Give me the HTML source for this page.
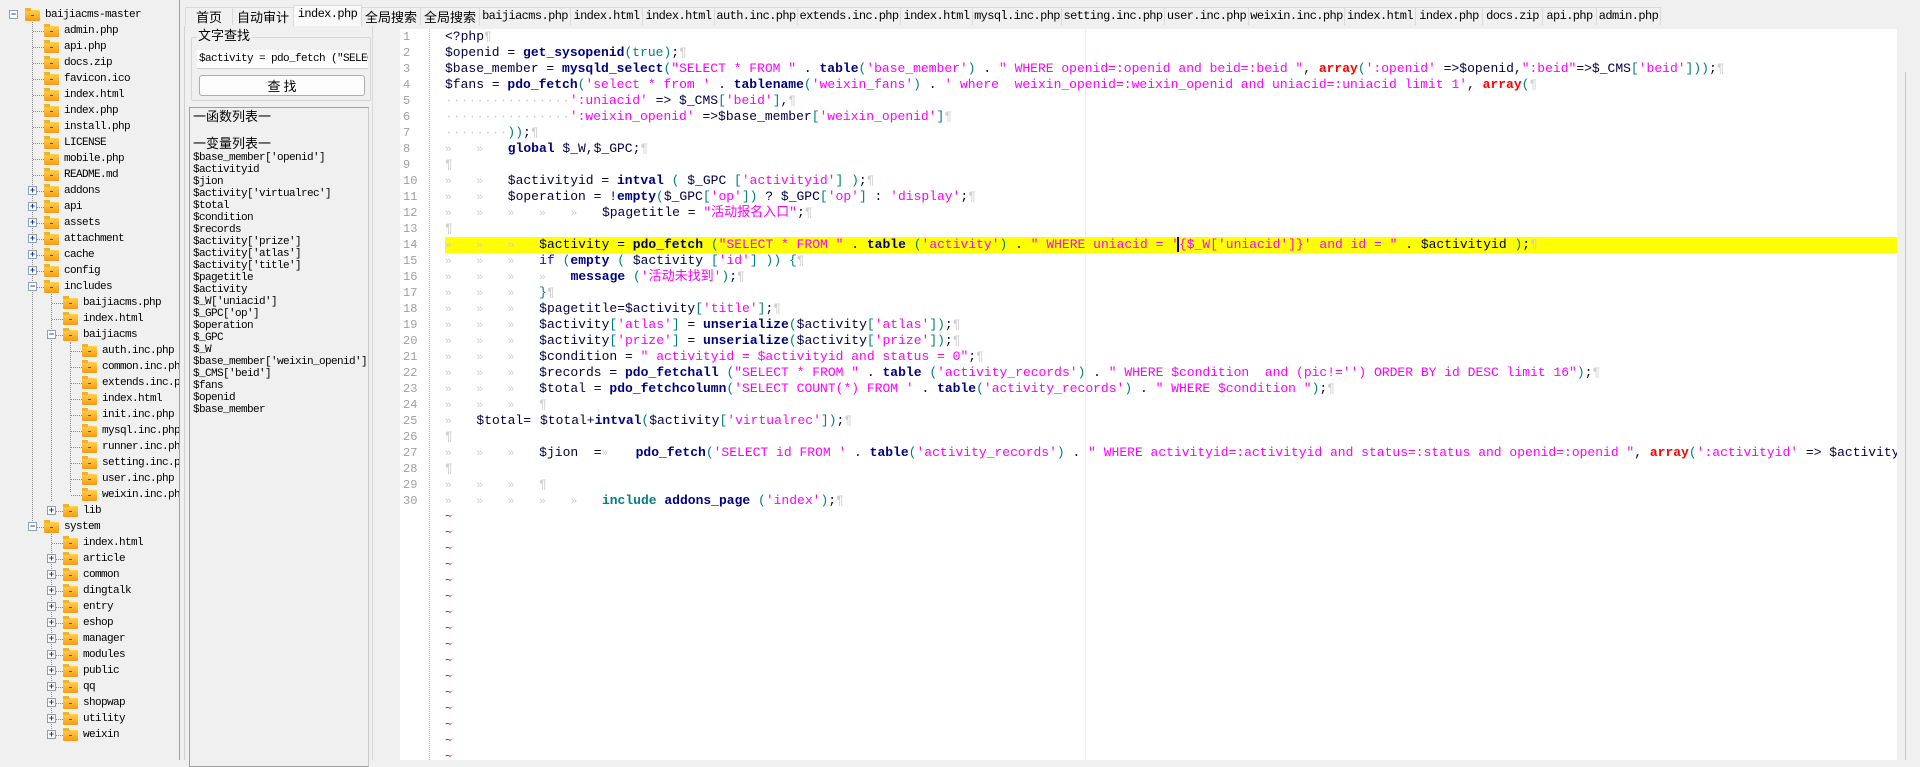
<!DOCTYPE html>
<html><head><meta charset="utf-8">
<style>
*{margin:0;padding:0;box-sizing:border-box}
body{width:1920px;height:760px;overflow:hidden;background:#f0f0f0;position:relative;font-family:"Liberation Mono","Noto Sans CJK SC",monospace;}
.abs{position:absolute}
/* tree */
#tree{position:absolute;left:0;top:0;width:180px;height:760px;background:#f0f0f0;border-right:1px solid #a0a0a0;overflow:hidden}
.row{position:absolute;height:16px;font-size:11px;letter-spacing:-0.6px;line-height:16px;color:#000;white-space:nowrap}
.fold{position:absolute;width:15px;height:11px;background:linear-gradient(#ffd24a,#f59a16);border-radius:1px}
.fold:before{content:"";position:absolute;left:0;top:-2px;width:6px;height:3px;background:#f5b02a}
.fold:after{content:"";position:absolute;left:6px;top:5px;width:3px;height:1px;background:#7a4a00}
.box{position:absolute;width:9px;height:9px;border:1px solid #8e9cb5;background:#fff;font-size:9px;line-height:7px;text-align:center;color:#243a8a;font-family:"Liberation Sans",sans-serif;font-weight:bold}
.vl{position:absolute;border-left:1px dotted #888;width:0}
.hl{position:absolute;border-top:1px dotted #888;height:0}
/* tabs */
.tab{position:absolute;top:7px;height:18px;border:1px solid #dadada;border-bottom:none;background:#f0f0f0;font-size:12px;line-height:17px;text-align:center;white-space:nowrap;overflow:hidden;font-family:"Liberation Mono","Noto Sans CJK SC",monospace;letter-spacing:-0.6px}
.tab.cn{font-family:"Noto Sans CJK SC",sans-serif;letter-spacing:0;font-size:13px}
.tab.act{top:5px;height:21px;background:#f9f9f9}
/* middle */
#list{position:absolute;left:189px;top:107px;width:180px;height:660px;border:1px solid #a0a0a0;border-right:1px solid #c8c8c8;background:#f0f0f0;font-size:11px;letter-spacing:-0.6px;line-height:12px;padding:2px 0 0 3px;white-space:pre}
/* editor */
#ed{position:absolute;left:400px;top:29px;width:1497px;height:731px;background:#fff;overflow:hidden;font-family:"Liberation Mono","Noto Sans CJK SC",monospace;font-size:13px}
.ln{position:absolute;left:3px;width:28px;height:16px;line-height:16px;color:#a0a0a0;font-size:12px}
.cl{position:absolute;left:45px;height:16px;line-height:16px;white-space:pre;color:#000040;right:0;overflow:hidden}
.cl i{font-style:normal;display:inline-block;width:31.4px;color:#cfcfcf;font-size:11px}
.w{color:#d0d0d0}
.f{color:#000080;font-weight:bold}
.s{color:#ff00ff}
.k{color:#ff0000;font-weight:bold}
.t{color:#008080}
.b{color:#0000ff}
.inc{color:#008080;font-weight:bold}
.y{background:#ffff00;left:45px}
.tl{position:absolute;left:45px;color:#e00000;font-size:12px;line-height:16px}
</style></head><body>

<div id="tree">
<div class="vl" style="left:13px;top:20px;height:0"></div>
<div class="vl" style="left:32px;top:22px;height:505px"></div>
<div class="vl" style="left:51px;top:294px;height:207px"></div>
<div class="vl" style="left:70px;top:342px;height:150px"></div>
<div class="vl" style="left:51px;top:534px;height:201px"></div>
</div>

<!-- tabs -->
<div class="tab cn" style="left:185px;width:48px">首页</div>
<div class="tab cn" style="left:232px;width:62px">自动审计</div>
<div class="tab act" style="left:293px;width:69px">index.php</div>
<div class="tab cn" style="left:361px;width:60px">全局搜索</div>
<div class="tab cn" style="left:420px;width:60px">全局搜索</div>
<div class="tab" style="left:479px;width:92px">baijiacms.php</div>
<div class="tab" style="left:570px;width:73px">index.html</div>
<div class="tab" style="left:642px;width:73px">index.html</div>
<div class="tab" style="left:714px;width:84px">auth.inc.php</div>
<div class="tab" style="left:797px;width:104px">extends.inc.php</div>
<div class="tab" style="left:900px;width:73px">index.html</div>
<div class="tab" style="left:972px;width:90px">mysql.inc.php</div>
<div class="tab" style="left:1061px;width:104px">setting.inc.php</div>
<div class="tab" style="left:1164px;width:85px">user.inc.php</div>
<div class="tab" style="left:1248px;width:97px">weixin.inc.php</div>
<div class="tab" style="left:1344px;width:72px">index.html</div>
<div class="tab" style="left:1415px;width:68px">index.php</div>
<div class="tab" style="left:1482px;width:61px">docs.zip</div>
<div class="tab" style="left:1542px;width:55px">api.php</div>
<div class="tab" style="left:1596px;width:65px">admin.php</div>

<!-- middle panel -->
<div class="abs" style="left:184px;top:26px;width:1px;height:734px;background:#d0d0d0"></div>
<div class="abs" style="left:191px;top:37px;width:180px;height:64px;border:1px solid #d6d6d6;border-radius:2px"></div>
<div class="abs" style="left:196px;top:27px;padding:0 2px;background:#f0f0f0;font-family:'Noto Sans CJK SC',sans-serif;font-size:13px;line-height:16px">文字查找</div>
<div class="abs" style="left:197px;top:50px;width:171px;height:19px;background:#fff;border-bottom:1px solid #ccc;font-size:11px;letter-spacing:-0.6px;line-height:19px;padding-left:2px;white-space:pre;overflow:hidden">$activity = pdo_fetch ("SELECT</div>
<div class="abs" style="left:199px;top:75px;width:166px;height:21px;background:#fdfdfd;border:1px solid #adadad;border-radius:3px;font-family:'Noto Sans CJK SC',sans-serif;font-size:13px;line-height:19px;text-align:center">查 找</div>
<div id="list"><span style="font-family:'Noto Sans CJK SC',sans-serif;font-size:13px;letter-spacing:0">一函数列表一</span>

<span style="font-family:'Noto Sans CJK SC',sans-serif;font-size:13px;letter-spacing:0">一变量列表一</span>
$base_member['openid']
$activityid
$jion
$activity['virtualrec']
$total
$condition
$records
$activity['prize']
$activity['atlas']
$activity['title']
$pagetitle
$activity
$_W['uniacid']
$_GPC['op']
$operation
$_GPC
$_W
$base_member['weixin_openid']
$_CMS['beid']
$fans
$openid
$base_member</div>
<div class="abs" style="left:372px;top:26px;width:1px;height:734px;background:#d8d8d8"></div>

<!-- editor -->
<div id="ed">
<div class="abs" style="left:29px;top:0;width:0;height:731px;border-left:1px dotted #c0c0c0"></div>
<div class="abs" style="left:685px;top:0;width:1px;height:731px;background:#ececec"></div>
<div class="cl y" style="top:208px"></div>
<div id="lines"></div>
<div class="ln" style="top:0">1</div><div class="cl" style="top:0">&lt;?php<span class="w">¶</span></div>
<div class="ln" style="top:16px">2</div><div class="cl" style="top:16px">$openid = <span class="f">get_sysopenid</span><span class="t">(true)</span>;<span class="w">¶</span></div>
<div class="ln" style="top:32px">3</div><div class="cl" style="top:32px">$base_member = <span class="f">mysqld_select</span><span class="t">(</span><span class="s">"SELECT * FROM "</span> . <span class="f">table</span><span class="t">(</span><span class="s">'base_member'</span><span class="t">)</span> . <span class="s">" WHERE openid=:openid and beid=:beid "</span>, <span class="k">array</span><span class="t">(</span><span class="s">':openid'</span> =&gt;$openid,<span class="s">":beid"</span>=&gt;$_CMS<span class="t">[</span><span class="s">'beid'</span><span class="t">]))</span>;<span class="w">¶</span></div>
<div class="ln" style="top:48px">4</div><div class="cl" style="top:48px">$fans = <span class="f">pdo_fetch</span><span class="t">(</span><span class="s">'select * from '</span> . <span class="f">tablename</span><span class="t">(</span><span class="s">'weixin_fans'</span><span class="t">)</span> . <span class="s">' where  weixin_openid=:weixin_openid and uniacid=:uniacid limit 1'</span>, <span class="k">array</span><span class="t">(</span><span class="w">¶</span></div>
<div class="ln" style="top:64px">5</div><div class="cl" style="top:64px"><span class="w">················</span><span class="s">':uniacid'</span> =&gt; $_CMS<span class="t">[</span><span class="s">'beid'</span><span class="t">]</span>,<span class="w">¶</span></div>
<div class="ln" style="top:80px">6</div><div class="cl" style="top:80px"><span class="w">················</span><span class="s">':weixin_openid'</span> =&gt;$base_member<span class="t">[</span><span class="s">'weixin_openid'</span><span class="t">]</span><span class="w">¶</span></div>
<div class="ln" style="top:96px">7</div><div class="cl" style="top:96px"><span class="w">········</span><span class="t">))</span>;<span class="w">¶</span></div>
<div class="ln" style="top:112px">8</div><div class="cl" style="top:112px"><i>»</i><i>»</i><span class="f">global</span> $_W,$_GPC;<span class="w">¶</span></div>
<div class="ln" style="top:128px">9</div><div class="cl" style="top:128px"><span class="w">¶</span></div>
<div class="ln" style="top:144px">10</div><div class="cl" style="top:144px"><i>»</i><i>»</i>$activityid = <span class="f">intval</span> <span class="t">(</span> $_GPC <span class="t">[</span><span class="s">'activityid'</span><span class="t">]</span> <span class="t">)</span>;<span class="w">¶</span></div>
<div class="ln" style="top:160px">11</div><div class="cl" style="top:160px"><i>»</i><i>»</i>$operation = !<span class="f">empty</span><span class="t">(</span>$_GPC<span class="t">[</span><span class="s">'op'</span><span class="t">])</span> ? $_GPC<span class="t">[</span><span class="s">'op'</span><span class="t">]</span> : <span class="s">'display'</span>;<span class="w">¶</span></div>
<div class="ln" style="top:176px">12</div><div class="cl" style="top:176px"><i>»</i><i>»</i><i>»</i><i>»</i><i>»</i>$pagetitle = <span class="s">"活动报名入口"</span>;<span class="w">¶</span></div>
<div class="ln" style="top:192px">13</div><div class="cl" style="top:192px"><span class="w">¶</span></div>
<div class="ln" style="top:208px">14</div><div class="cl" style="top:208px"><i>»</i><i>»</i><i>»</i>$activity = <span class="f">pdo_fetch</span> <span class="t">(</span><span class="s">"SELECT * FROM "</span> . <span class="f">table</span> <span class="t">(</span><span class="s">'activity'</span><span class="t">)</span> . <span class="s">" WHERE uniacid = '</span><span style="border-left:2px solid #0000c0;margin-left:-2px"></span><span class="s">{$_W['uniacid']}' and id = "</span> . $activityid <span class="t">)</span>;<span class="w">¶</span></div>
<div class="ln" style="top:224px">15</div><div class="cl" style="top:224px"><i>»</i><i>»</i><i>»</i><span class="b">if</span> <span class="t">(</span><span class="f">empty</span> <span class="t">(</span> $activity <span class="t">[</span><span class="s">'id'</span><span class="t">]</span> <span class="t">))</span> <span class="t">{</span><span class="w">¶</span></div>
<div class="ln" style="top:240px">16</div><div class="cl" style="top:240px"><i>»</i><i>»</i><i>»</i><i>»</i><span class="f">message</span> <span class="t">(</span><span class="s">'活动未找到'</span><span class="t">)</span>;<span class="w">¶</span></div>
<div class="ln" style="top:256px">17</div><div class="cl" style="top:256px"><i>»</i><i>»</i><i>»</i><span class="t">}</span><span class="w">¶</span></div>
<div class="ln" style="top:272px">18</div><div class="cl" style="top:272px"><i>»</i><i>»</i><i>»</i>$pagetitle=$activity<span class="t">[</span><span class="s">'title'</span><span class="t">]</span>;<span class="w">¶</span></div>
<div class="ln" style="top:288px">19</div><div class="cl" style="top:288px"><i>»</i><i>»</i><i>»</i>$activity<span class="t">[</span><span class="s">'atlas'</span><span class="t">]</span> = <span class="f">unserialize</span><span class="t">(</span>$activity<span class="t">[</span><span class="s">'atlas'</span><span class="t">])</span>;<span class="w">¶</span></div>
<div class="ln" style="top:304px">20</div><div class="cl" style="top:304px"><i>»</i><i>»</i><i>»</i>$activity<span class="t">[</span><span class="s">'prize'</span><span class="t">]</span> = <span class="f">unserialize</span><span class="t">(</span>$activity<span class="t">[</span><span class="s">'prize'</span><span class="t">])</span>;<span class="w">¶</span></div>
<div class="ln" style="top:320px">21</div><div class="cl" style="top:320px"><i>»</i><i>»</i><i>»</i>$condition = <span class="s">" activityid = $activityid and status = 0"</span>;<span class="w">¶</span></div>
<div class="ln" style="top:336px">22</div><div class="cl" style="top:336px"><i>»</i><i>»</i><i>»</i>$records = <span class="f">pdo_fetchall</span> <span class="t">(</span><span class="s">"SELECT * FROM "</span> . <span class="f">table</span> <span class="t">(</span><span class="s">'activity_records'</span><span class="t">)</span> . <span class="s">" WHERE $condition  and (pic!='') ORDER BY id DESC limit 16"</span><span class="t">)</span>;<span class="w">¶</span></div>
<div class="ln" style="top:352px">23</div><div class="cl" style="top:352px"><i>»</i><i>»</i><i>»</i>$total = <span class="f">pdo_fetchcolumn</span><span class="t">(</span><span class="s">'SELECT COUNT(*) FROM '</span> . <span class="f">table</span><span class="t">(</span><span class="s">'activity_records'</span><span class="t">)</span> . <span class="s">" WHERE $condition "</span><span class="t">)</span>;<span class="w">¶</span></div>
<div class="ln" style="top:368px">24</div><div class="cl" style="top:368px"><i>»</i><i>»</i><i>»</i><span class="w">¶</span></div>
<div class="ln" style="top:384px">25</div><div class="cl" style="top:384px"><i>»</i>$total=<i style="width:9px"></i>$total+<span class="f">intval</span><span class="t">(</span>$activity<span class="t">[</span><span class="s">'virtualrec'</span><span class="t">])</span>;<span class="w">¶</span></div>
<div class="ln" style="top:400px">26</div><div class="cl" style="top:400px"><span class="w">¶</span></div>
<div class="ln" style="top:416px">27</div><div class="cl" style="top:416px"><i>»</i><i>»</i><i>»</i>$jion  =<i style="width:34px">»</i><span class="f">pdo_fetch</span><span class="t">(</span><span class="s">'SELECT id FROM '</span> . <span class="f">table</span><span class="t">(</span><span class="s">'activity_records'</span><span class="t">)</span> . <span class="s">" WHERE activityid=:activityid and status=:status and openid=:openid "</span>, <span class="k">array</span><span class="t">(</span><span class="s">':activityid'</span> =&gt; $activityid, ':status' =&gt; 1, ':openid' =&gt; $openid));</div>
<div class="ln" style="top:432px">28</div><div class="cl" style="top:432px"><span class="w">¶</span></div>
<div class="ln" style="top:448px">29</div><div class="cl" style="top:448px"><i>»</i><i>»</i><i>»</i><span class="w">¶</span></div>
<div class="ln" style="top:464px">30</div><div class="cl" style="top:464px"><i>»</i><i>»</i><i>»</i><i>»</i><i>»</i><span class="inc">include</span> <span class="f">addons_page</span> <span class="t">(</span><span class="s">'index'</span><span class="t">)</span>;<span class="w">¶</span></div>
<div class="tl" style="top:480px">~</div><div class="tl" style="top:496px">~</div><div class="tl" style="top:512px">~</div><div class="tl" style="top:528px">~</div>
<div class="tl" style="top:544px">~</div><div class="tl" style="top:560px">~</div><div class="tl" style="top:576px">~</div><div class="tl" style="top:592px">~</div>
<div class="tl" style="top:608px">~</div><div class="tl" style="top:624px">~</div><div class="tl" style="top:640px">~</div><div class="tl" style="top:656px">~</div>
<div class="tl" style="top:672px">~</div><div class="tl" style="top:688px">~</div><div class="tl" style="top:704px">~</div><div class="tl" style="top:720px">~</div>
</div>
<div class="abs" style="left:1897px;top:29px;width:23px;height:731px;background:#f0f0f0"></div>
<div class="abs" style="left:1905px;top:72px;width:1px;height:688px;background:#c8c8c8"></div>

<!-- tree rows -->
<div style="position:absolute;left:0;top:0">
<div class="box" style="left:9px;top:10px">−</div><div class="fold" style="left:25px;top:10px"></div><div class="row" style="left:45px;top:7px">baijiacms-master</div>
</div>
<div id="tr" style="position:absolute;left:0;top:0;width:180px;height:760px;overflow:hidden">
<!-- level1 rows 1..10 files -->
<div class="hl" style="left:33px;top:31px;width:11px"></div><div class="fold" style="left:44px;top:26px"></div><div class="row" style="left:64px;top:23px">admin.php</div>
<div class="hl" style="left:33px;top:47px;width:11px"></div><div class="fold" style="left:44px;top:42px"></div><div class="row" style="left:64px;top:39px">api.php</div>
<div class="hl" style="left:33px;top:63px;width:11px"></div><div class="fold" style="left:44px;top:58px"></div><div class="row" style="left:64px;top:55px">docs.zip</div>
<div class="hl" style="left:33px;top:79px;width:11px"></div><div class="fold" style="left:44px;top:74px"></div><div class="row" style="left:64px;top:71px">favicon.ico</div>
<div class="hl" style="left:33px;top:95px;width:11px"></div><div class="fold" style="left:44px;top:90px"></div><div class="row" style="left:64px;top:87px">index.html</div>
<div class="hl" style="left:33px;top:111px;width:11px"></div><div class="fold" style="left:44px;top:106px"></div><div class="row" style="left:64px;top:103px">index.php</div>
<div class="hl" style="left:33px;top:127px;width:11px"></div><div class="fold" style="left:44px;top:122px"></div><div class="row" style="left:64px;top:119px">install.php</div>
<div class="hl" style="left:33px;top:143px;width:11px"></div><div class="fold" style="left:44px;top:138px"></div><div class="row" style="left:64px;top:135px">LICENSE</div>
<div class="hl" style="left:33px;top:159px;width:11px"></div><div class="fold" style="left:44px;top:154px"></div><div class="row" style="left:64px;top:151px">mobile.php</div>
<div class="hl" style="left:33px;top:175px;width:11px"></div><div class="fold" style="left:44px;top:170px"></div><div class="row" style="left:64px;top:167px">README.md</div>
<!-- level1 folders -->
<div class="hl" style="left:37px;top:191px;width:7px"></div><div class="box" style="left:28px;top:186px">+</div><div class="fold" style="left:44px;top:186px"></div><div class="row" style="left:64px;top:183px">addons</div>
<div class="hl" style="left:37px;top:207px;width:7px"></div><div class="box" style="left:28px;top:202px">+</div><div class="fold" style="left:44px;top:202px"></div><div class="row" style="left:64px;top:199px">api</div>
<div class="hl" style="left:37px;top:223px;width:7px"></div><div class="box" style="left:28px;top:218px">+</div><div class="fold" style="left:44px;top:218px"></div><div class="row" style="left:64px;top:215px">assets</div>
<div class="hl" style="left:37px;top:239px;width:7px"></div><div class="box" style="left:28px;top:234px">+</div><div class="fold" style="left:44px;top:234px"></div><div class="row" style="left:64px;top:231px">attachment</div>
<div class="hl" style="left:37px;top:255px;width:7px"></div><div class="box" style="left:28px;top:250px">+</div><div class="fold" style="left:44px;top:250px"></div><div class="row" style="left:64px;top:247px">cache</div>
<div class="hl" style="left:37px;top:271px;width:7px"></div><div class="box" style="left:28px;top:266px">+</div><div class="fold" style="left:44px;top:266px"></div><div class="row" style="left:64px;top:263px">config</div>
<div class="hl" style="left:37px;top:287px;width:7px"></div><div class="box" style="left:28px;top:282px">−</div><div class="fold" style="left:44px;top:282px"></div><div class="row" style="left:64px;top:279px">includes</div>
<!-- includes children -->
<div class="hl" style="left:52px;top:303px;width:11px"></div><div class="fold" style="left:63px;top:298px"></div><div class="row" style="left:83px;top:295px">baijiacms.php</div>
<div class="hl" style="left:52px;top:319px;width:11px"></div><div class="fold" style="left:63px;top:314px"></div><div class="row" style="left:83px;top:311px">index.html</div>
<div class="hl" style="left:56px;top:335px;width:7px"></div><div class="box" style="left:47px;top:330px">−</div><div class="fold" style="left:63px;top:330px"></div><div class="row" style="left:83px;top:327px">baijiacms</div>
<div class="hl" style="left:71px;top:351px;width:11px"></div><div class="fold" style="left:82px;top:346px"></div><div class="row" style="left:102px;top:343px">auth.inc.php</div>
<div class="hl" style="left:71px;top:367px;width:11px"></div><div class="fold" style="left:82px;top:362px"></div><div class="row" style="left:102px;top:359px">common.inc.php</div>
<div class="hl" style="left:71px;top:383px;width:11px"></div><div class="fold" style="left:82px;top:378px"></div><div class="row" style="left:102px;top:375px">extends.inc.php</div>
<div class="hl" style="left:71px;top:399px;width:11px"></div><div class="fold" style="left:82px;top:394px"></div><div class="row" style="left:102px;top:391px">index.html</div>
<div class="hl" style="left:71px;top:415px;width:11px"></div><div class="fold" style="left:82px;top:410px"></div><div class="row" style="left:102px;top:407px">init.inc.php</div>
<div class="hl" style="left:71px;top:431px;width:11px"></div><div class="fold" style="left:82px;top:426px"></div><div class="row" style="left:102px;top:423px">mysql.inc.php</div>
<div class="hl" style="left:71px;top:447px;width:11px"></div><div class="fold" style="left:82px;top:442px"></div><div class="row" style="left:102px;top:439px">runner.inc.php</div>
<div class="hl" style="left:71px;top:463px;width:11px"></div><div class="fold" style="left:82px;top:458px"></div><div class="row" style="left:102px;top:455px">setting.inc.php</div>
<div class="hl" style="left:71px;top:479px;width:11px"></div><div class="fold" style="left:82px;top:474px"></div><div class="row" style="left:102px;top:471px">user.inc.php</div>
<div class="hl" style="left:71px;top:495px;width:11px"></div><div class="fold" style="left:82px;top:490px"></div><div class="row" style="left:102px;top:487px">weixin.inc.php</div>
<div class="hl" style="left:56px;top:511px;width:7px"></div><div class="box" style="left:47px;top:506px">+</div><div class="fold" style="left:63px;top:506px"></div><div class="row" style="left:83px;top:503px">lib</div>
<div class="hl" style="left:37px;top:527px;width:7px"></div><div class="box" style="left:28px;top:522px">−</div><div class="fold" style="left:44px;top:522px"></div><div class="row" style="left:64px;top:519px">system</div>
<div class="hl" style="left:52px;top:543px;width:11px"></div><div class="fold" style="left:63px;top:538px"></div><div class="row" style="left:83px;top:535px">index.html</div>
<div class="hl" style="left:56px;top:559px;width:7px"></div><div class="box" style="left:47px;top:554px">+</div><div class="fold" style="left:63px;top:554px"></div><div class="row" style="left:83px;top:551px">article</div>
<div class="hl" style="left:56px;top:575px;width:7px"></div><div class="box" style="left:47px;top:570px">+</div><div class="fold" style="left:63px;top:570px"></div><div class="row" style="left:83px;top:567px">common</div>
<div class="hl" style="left:56px;top:591px;width:7px"></div><div class="box" style="left:47px;top:586px">+</div><div class="fold" style="left:63px;top:586px"></div><div class="row" style="left:83px;top:583px">dingtalk</div>
<div class="hl" style="left:56px;top:607px;width:7px"></div><div class="box" style="left:47px;top:602px">+</div><div class="fold" style="left:63px;top:602px"></div><div class="row" style="left:83px;top:599px">entry</div>
<div class="hl" style="left:56px;top:623px;width:7px"></div><div class="box" style="left:47px;top:618px">+</div><div class="fold" style="left:63px;top:618px"></div><div class="row" style="left:83px;top:615px">eshop</div>
<div class="hl" style="left:56px;top:639px;width:7px"></div><div class="box" style="left:47px;top:634px">+</div><div class="fold" style="left:63px;top:634px"></div><div class="row" style="left:83px;top:631px">manager</div>
<div class="hl" style="left:56px;top:655px;width:7px"></div><div class="box" style="left:47px;top:650px">+</div><div class="fold" style="left:63px;top:650px"></div><div class="row" style="left:83px;top:647px">modules</div>
<div class="hl" style="left:56px;top:671px;width:7px"></div><div class="box" style="left:47px;top:666px">+</div><div class="fold" style="left:63px;top:666px"></div><div class="row" style="left:83px;top:663px">public</div>
<div class="hl" style="left:56px;top:687px;width:7px"></div><div class="box" style="left:47px;top:682px">+</div><div class="fold" style="left:63px;top:682px"></div><div class="row" style="left:83px;top:679px">qq</div>
<div class="hl" style="left:56px;top:703px;width:7px"></div><div class="box" style="left:47px;top:698px">+</div><div class="fold" style="left:63px;top:698px"></div><div class="row" style="left:83px;top:695px">shopwap</div>
<div class="hl" style="left:56px;top:719px;width:7px"></div><div class="box" style="left:47px;top:714px">+</div><div class="fold" style="left:63px;top:714px"></div><div class="row" style="left:83px;top:711px">utility</div>
<div class="hl" style="left:56px;top:735px;width:7px"></div><div class="box" style="left:47px;top:730px">+</div><div class="fold" style="left:63px;top:730px"></div><div class="row" style="left:83px;top:727px">weixin</div>
</div>
<div class="abs" style="left:179px;top:0;width:1px;height:760px;background:#a0a0a0"></div>
</body></html>
